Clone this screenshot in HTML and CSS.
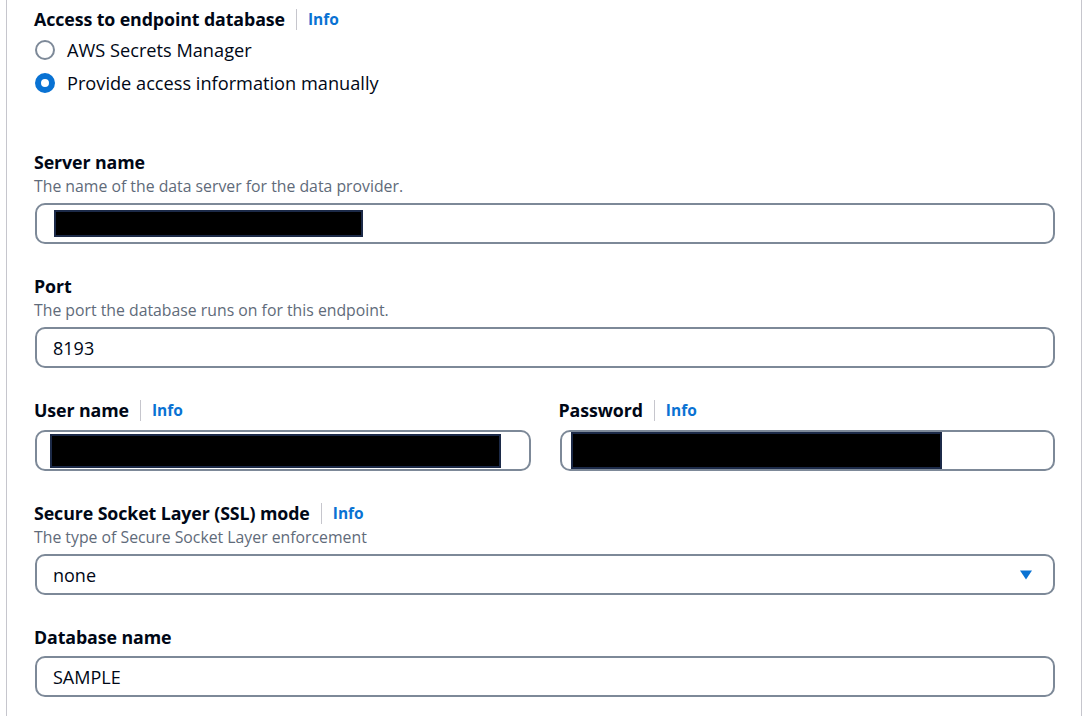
FILE: index.html
```html
<!DOCTYPE html>
<html lang="en">
<head>
<meta charset="utf-8">
<title>Endpoint access</title>
<link rel="stylesheet" href="styles.css">
</head>
<body>
<div class="panel">
  <div class="field field-first">
    <div class="label-row">
      <span class="label">Access to endpoint database</span>
      <span class="sep"></span>
      <a class="info">Info</a>
    </div>
    <div class="radio-group">
      <label class="radio-row"><span class="radio"></span><span class="radio-text">AWS Secrets Manager</span></label>
      <label class="radio-row"><span class="radio radio-checked"></span><span class="radio-text">Provide access information manually</span></label>
    </div>
  </div>

  <div class="field field-server">
    <div class="label-row"><span class="label">Server name</span></div>
    <div class="desc">The name of the data server for the data provider.</div>
    <div class="input input-with-desc"><span class="redact redact-server"></span></div>
  </div>

  <div class="field">
    <div class="label-row"><span class="label">Port</span></div>
    <div class="desc">The port the database runs on for this endpoint.</div>
    <div class="input input-with-desc"><span class="value">8193</span></div>
  </div>

  <div class="field cols">
    <div class="col">
      <div class="label-row">
        <span class="label">User name</span><span class="sep"></span><a class="info">Info</a>
      </div>
      <div class="input input-no-desc input-redact"><span class="redact redact-user"></span></div>
    </div>
    <div class="col">
      <div class="label-row">
        <span class="label">Password</span><span class="sep"></span><a class="info">Info</a>
      </div>
      <div class="input input-no-desc input-redact-pw"><span class="redact redact-pw"></span></div>
    </div>
  </div>

  <div class="field">
    <div class="label-row">
      <span class="label">Secure Socket Layer (SSL) mode</span><span class="sep"></span><a class="info">Info</a>
    </div>
    <div class="desc">The type of Secure Socket Layer enforcement</div>
    <div class="input input-with-desc select">
      <span class="value">none</span>
      <svg class="caret" width="12" height="10" viewBox="0 0 12 10"><path d="M0 0.5 H12 L6 9.5 Z" fill="#0972d3"/></svg>
    </div>
  </div>

  <div class="field">
    <div class="label-row"><span class="label">Database name</span></div>
    <div class="input input-no-desc input-db"><span class="value">SAMPLE</span></div>
  </div>
</div>
</body>
</html>
```
FILE: styles.css
```css
html, body {
  margin: 0;
  padding: 0;
  background: #ffffff;
}
body {
  font-family: "Open Sans", "Noto Sans", "Liberation Sans", sans-serif;
  color: #000716;
}
.panel {
  margin-left: 6px;
  width: 1076px;
  height: 716px;
  box-sizing: border-box;
  border-left: 1px solid #c6c6cd;
  border-right: 1px solid #c6c6cd;
  padding: 7px 26px 0 27px;
}
.field {
  margin-top: 30px;
}
.field-first {
  margin-top: 0;
}
.field-server {
  margin-top: 51px;
}
.label-row {
  display: flex;
  align-items: center;
  height: 24px;
}
.label {
  font-size: 17.8px;
  font-weight: 700;
  line-height: 24px;
  letter-spacing: -0.1px;
}
.sep {
  width: 1px;
  height: 21px;
  background: #c6c6cd;
  margin: 0 11px 0 11px;
}
.info {
  font-size: 15.5px;
  font-weight: 700;
  color: #0972d3;
  line-height: 24px;
}
.desc {
  font-size: 15.8px;
  line-height: 24px;
  color: #5f6b7a;
}
.radio-group {
  margin-top: 2px;
}
.radio-row {
  display: flex;
  align-items: center;
  height: 33px;
}
.radio {
  width: 20px;
  height: 20px;
  box-sizing: border-box;
  border-radius: 50%;
  border: 2px solid #7d8998;
  margin-left: 1px;
  flex: none;
}
.radio-checked {
  border: 6px solid #0972d3;
  background: #ffffff;
}
.radio-text {
  margin-left: 12px;
  font-size: 18.2px;
  line-height: 24px;
}
.input {
  height: 41px;
  box-sizing: border-box;
  border: 2px solid #7d8998;
  border-radius: 10px;
  display: flex;
  align-items: center;
  padding-left: 16px;
  margin-left: 1px;
}
.input-with-desc {
  margin-top: 5px;
}
.input-no-desc {
  margin-top: 8px;
}
.input-db {
  margin-top: 7px;
}
.value {
  font-size: 18px;
  line-height: 24px;
}
.redact {
  display: block;
  background: #000000;
  border: 2px solid #1c2a48;
  box-sizing: border-box;
}
.redact-server {
  width: 309px;
  height: 27px;
  margin-left: 1px;
}
.input-redact {
  padding-left: 13px;
}
.redact-user {
  width: 451px;
  height: 34px;
}
.input-redact-pw {
  padding-left: 9px;
}
.redact-pw {
  width: 371px;
  height: 37px;
}
.cols {
  display: grid;
  grid-template-columns: 1fr 1fr;
  column-gap: 28px;
}
.select {
  justify-content: space-between;
  padding-right: 21px;
}
.caret {
  display: block;
}
```
